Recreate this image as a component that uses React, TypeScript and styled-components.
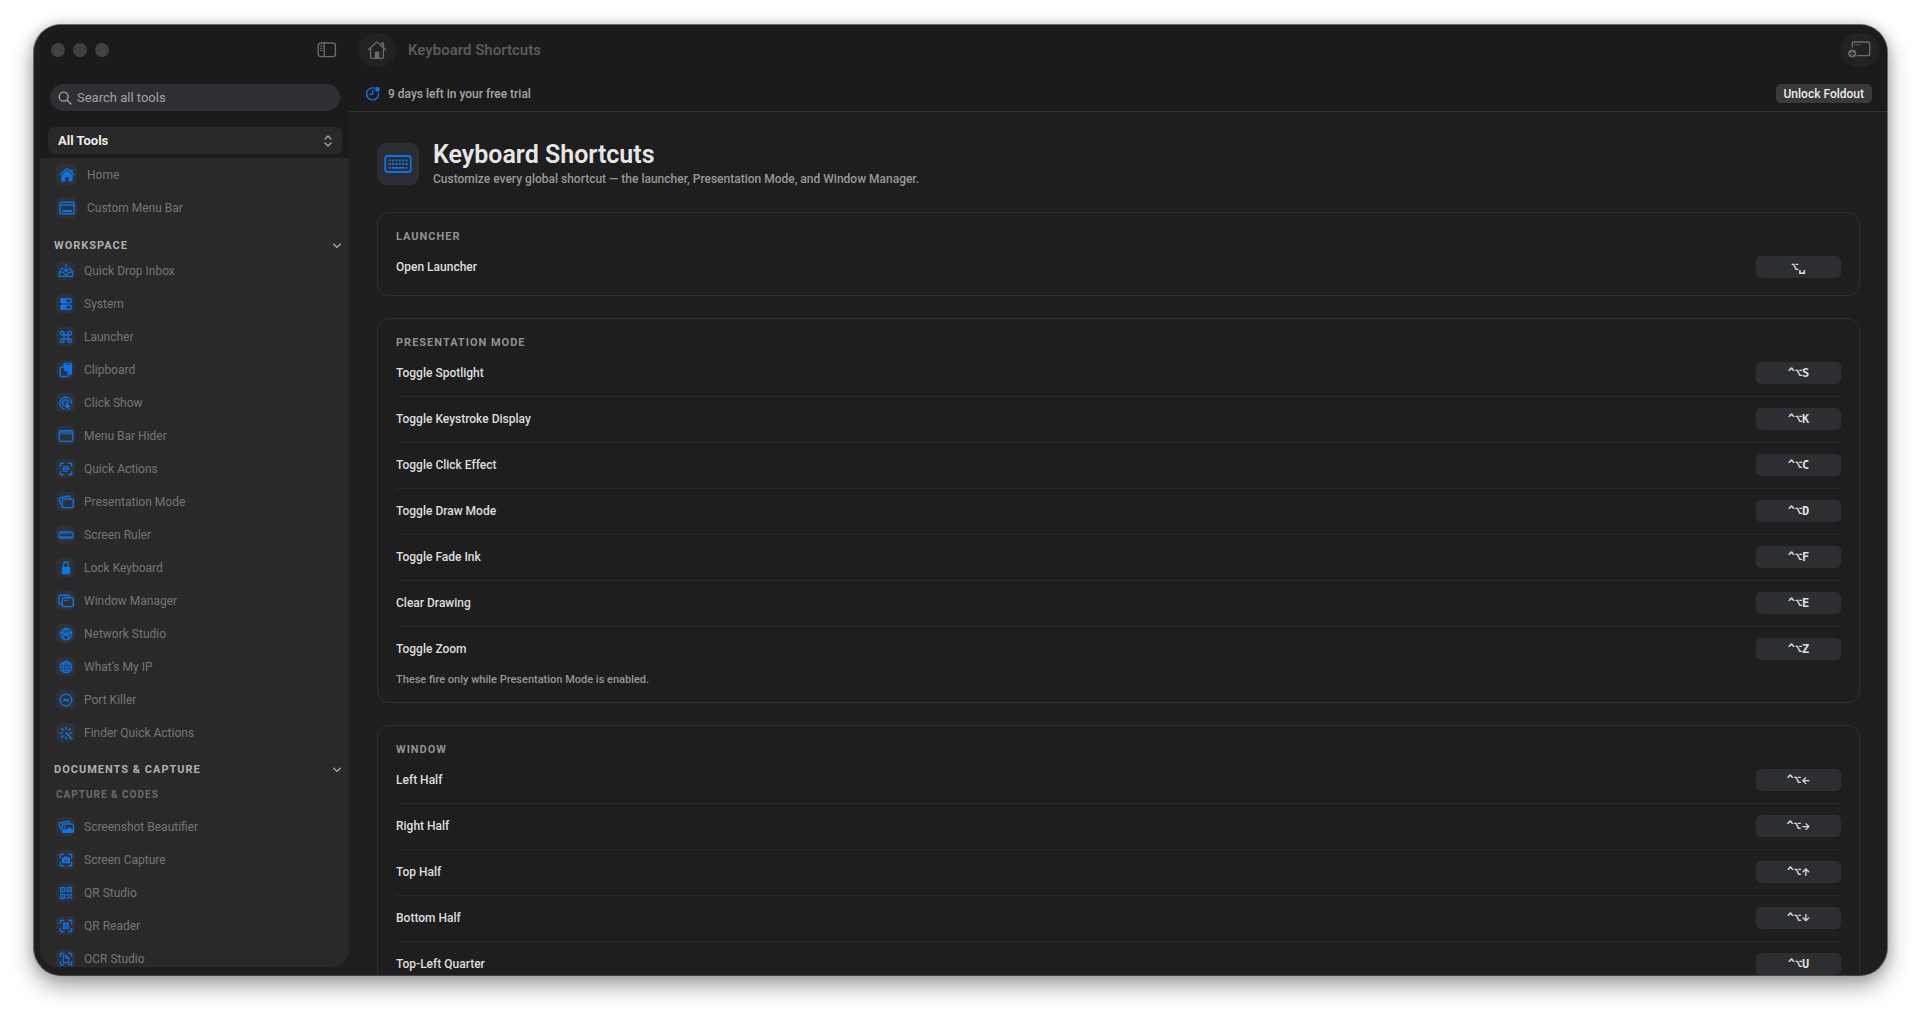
import React from "react";
import styled, { createGlobalStyle } from "styled-components";

const sans = `Roboto, "Liberation Sans", sans-serif`;
const mono = `"DejaVu Sans Mono", "Liberation Mono", monospace`;
const blue = "#0a74ea";
const tileColor = "#303136";

const GlobalStyle = createGlobalStyle`
  *, *::before, *::after { box-sizing: border-box; }
  html, body { margin: 0; height: 100%; background: #ffffff; }
  body { font-family: ${sans}; overflow: hidden; }
  button, input, select { font-family: inherit; border: 0; margin: 0; padding: 0; outline: 0; background: none; }
  h1, h2, h3, p, ul { margin: 0; padding: 0; }
  ul { list-style: none; }
  svg { display: block; flex: none; }
`;

const Desktop = styled.div`
  height: 100vh;
  padding: 24px 32px 40px 33px;
  background: #ffffff;
`;

const Window = styled.div`
  display: grid;
  grid-template-columns: 315px minmax(0, 1fr);
  height: 100%;
  overflow: hidden;
  border: 1px solid #6a6c6c;
  border-bottom-color: #464646;
  border-radius: 28px;
  background: #1e1e1e;
  box-shadow: 0 10px 22px rgba(0, 0, 0, 0.36), 0 0 12px rgba(0, 0, 0, 0.14);
`;

/* Sidebar */

const Sidebar = styled.aside`
  display: flex;
  flex-direction: column;
  min-height: 0;
  padding: 0 0 8px 6px;
`;

const SidebarTop = styled.div`
  flex: none;
  padding-bottom: 4px;
  background: #1b1b1b;
`;

const TitleBar = styled.div`
  display: flex;
  align-items: center;
  height: 50px;
  padding: 0 12px 0 11px;
`;

const Lights = styled.div`
  display: flex;
  gap: 8px;
  margin-right: auto;
`;

const Light = styled.button`
  width: 14px;
  height: 14px;
  border-radius: 50%;
  background: #404144;
`;

const PlainButton = styled.button`
  color: #6b6b6b;
`;

const SearchBox = styled.label`
  display: flex;
  align-items: center;
  gap: 5px;
  height: 27px;
  margin: 9px 9px 0 10px;
  padding: 0 8px;
  border-radius: 14px;
  background: #2e2f33;
  color: #a9a9ab;
`;

const SearchInput = styled.input`
  flex: 1;
  min-width: 0;
  font-size: 13px;
  line-height: 18px;
  color: #d0d0d0;
  &::placeholder { color: #a2a2a4; opacity: 1; }
`;

const Picker = styled.label`
  display: flex;
  align-items: center;
  height: 27px;
  margin: 16px 7px 0 8px;
  padding-right: 9px;
  border-radius: 6px;
  background: #282828;
  color: #a8a8a8;
`;

const PickerSelect = styled.select`
  flex: 1;
  height: 27px;
  padding-left: 10px;
  appearance: none;
  font-size: 13px;
  font-weight: 700;
  color: #ececec;
`;

const ToolList = styled.nav`
  flex: 1;
  min-height: 0;
  overflow: hidden;
  border-radius: 0 0 18px 18px;
  background: #292929;
`;

const TopGroup = styled.ul`
  padding-bottom: 1px;
`;

const ToolLink = styled.a<{ $large?: boolean }>`
  display: flex;
  align-items: center;
  gap: ${(p) => (p.$large ? 10 : 9)}px;
  height: 33px;
  padding-left: 16px;
  font-size: 12px;
  font-weight: 400;
  line-height: 16px;
  color: #767676;
  text-decoration: none;
`;

const Tile = styled.span<{ $large?: boolean }>`
  display: grid;
  place-items: center;
  width: ${(p) => (p.$large ? 21 : 19)}px;
  height: ${(p) => (p.$large ? 21 : 19)}px;
  border-radius: 5px;
  background: ${tileColor};
  color: ${blue};
`;

const SectionToggle = styled.button`
  display: flex;
  align-items: center;
  justify-content: space-between;
  width: 100%;
  height: 17px;
  margin-top: 12px;
  padding: 0 8px 0 14px;
  font-size: 11px;
  font-weight: 700;
  letter-spacing: 1px;
  color: #b0b0b0;
`;

const SubHeading = styled.h3`
  margin: 8px 0 6px 16px;
  font-size: 10px;
  font-weight: 700;
  line-height: 18px;
  letter-spacing: 1px;
  color: #6c6c6c;
`;

/* Main area */

const Main = styled.main`
  display: flex;
  flex-direction: column;
  min-width: 0;
  min-height: 0;
`;

const Toolbar = styled.header`
  display: flex;
  flex: none;
  align-items: center;
  gap: 12px;
  height: 50px;
  padding: 0 8px 0 9px;
  background: #1b1b1b;
`;

const RoundButton = styled.button`
  display: grid;
  place-items: center;
  width: 38px;
  height: 34px;
  border-radius: 17px;
  background: #222222;
  color: #6b6b6b;
`;

const ToolbarTitle = styled.div`
  flex: 1;
  font-size: 15px;
  font-weight: 600;
  color: #5a5a5a;
`;

const TrialBar = styled.div`
  display: flex;
  flex: none;
  align-items: center;
  gap: 7px;
  padding: 9px 15px 8px 16px;
  border-bottom: 1px solid #323232;
  background: #1b1b1b;
  font-size: 12px;
  font-weight: 500;
  line-height: 16px;
  color: #a6a6a6;
`;

const TrialIcon = styled.span`
  color: ${blue};
`;

const UnlockButton = styled.button`
  height: 19px;
  margin-left: auto;
  padding: 0 8px;
  border-radius: 5px;
  background: #38393b;
  font-size: 12px;
  font-weight: 500;
  color: #ececec;
`;

const Content = styled.div`
  display: flex;
  flex: 1;
  flex-direction: column;
  gap: 22px;
  min-height: 0;
  overflow: hidden;
  padding: 28px 27px 0 28px;
`;

const PageHead = styled.div`
  display: flex;
  flex: none;
  align-items: center;
  gap: 14px;
  margin-bottom: 2px;
`;

const PageTile = styled.span`
  display: grid;
  place-items: center;
  width: 42px;
  height: 42px;
  border-radius: 9px;
  background: #2c2d32;
  color: ${blue};
`;

const PageTitle = styled.h1`
  font-size: 25px;
  font-weight: 600;
  line-height: 30px;
  color: #e6e6e6;
`;

const PageText = styled.p`
  font-size: 12px;
  font-weight: 500;
  line-height: 18px;
  color: #989898;
`;

const Card = styled.section`
  flex: none;
  padding: 16px 18px 5px;
  border: 1px solid #2e2e2e;
  border-radius: 12px;
`;

const CardTitle = styled.h2`
  font-size: 11px;
  font-weight: 700;
  line-height: 15px;
  letter-spacing: 1px;
  color: #929292;
`;

const Row = styled.li`
  display: flex;
  align-items: center;
  justify-content: space-between;
  height: 46px;
  font-size: 12px;
  font-weight: 500;
  color: #dedede;
  & + & { box-shadow: inset 0 1px #282828; }
`;

const KeyButton = styled.button`
  width: 85px;
  height: 22px;
  border-radius: 5px;
  background: #2d2e32;
  font-family: ${mono};
  font-size: 12px;
  font-weight: 700;
  color: #dfdfdf;
`;

const ArrowKey = styled.span`
  font-family: Inter, ${mono};
  font-size: 10px;
`;

const Footnote = styled.p`
  margin: 1px 0 10px;
  font-size: 11px;
  font-weight: 500;
  line-height: 14px;
  color: #969696;
`;

/* Icons */

const S = ({ w = 16, h = 16, sw = 1.2, children }: { w?: number; h?: number; sw?: number; children: React.ReactNode }) => (
  <svg width={w} height={h} viewBox={`0 0 ${w} ${h}`} fill="none" stroke="currentColor" strokeWidth={sw} strokeLinecap="round" strokeLinejoin="round" aria-hidden="true">
    {children}
  </svg>
);

const fill = { fill: "currentColor", stroke: "none" };
const corners = <path d="M2.3 5.2V3.8a1.5 1.5 0 0 1 1.5-1.5h1.4M10.8 2.3h1.4a1.5 1.5 0 0 1 1.5 1.5v1.4M13.7 10.8v1.4a1.5 1.5 0 0 1-1.5 1.5h-1.4M5.2 13.7H3.8a1.5 1.5 0 0 1-1.5-1.5v-1.4" strokeWidth="1.4" />;

const icons: Record<string, React.ReactNode> = {
  home: (
    <S>
      <path d="M.9 7.7 8 1.5l7.1 6.2" />
      <path {...fill} d="M12 2.4h1.7v3.4L12 4.4zM8 3.6l5.6 4.8v5.2c0 .6-.4 1-1 1H9.6V10H6.4v4.6h-3c-.6 0-1-.4-1-1V8.4z" />
    </S>
  ),
  menubar: (
    <S sw={1.4}>
      <rect x=".9" y="2.2" width="14.2" height="11.6" rx="1.6" />
      <path d="M1 5h14" />
      <rect {...fill} x="3.2" y="10" width="9.6" height="2" rx=".5" />
    </S>
  ),
  inbox: (
    <S>
      <path d="M5 5.2H3.9L1.3 9.2v4.2h13.4V9.2l-2.6-4H11M1.3 9.2h3.5c.5 0 .8.3.9.8.3 1 1.2 1.6 2.3 1.6s2-.6 2.3-1.6c.1-.5.4-.8.9-.8h3.5M8 1.5v6.7M6 6.5l2 2 2-2" />
    </S>
  ),
  system: (
    <S>
      <rect {...fill} x="2.2" y="2" width="11.6" height="5.4" rx="1.7" />
      <rect {...fill} x="2.2" y="8.6" width="11.6" height="5.4" rx="1.7" />
      <rect x="8.6" y="3.4" width="3.8" height="2.6" rx=".8" fill={tileColor} stroke="none" />
      <rect x="8.6" y="10" width="3.8" height="2.6" rx=".8" fill={tileColor} stroke="none" />
    </S>
  ),
  launcher: (
    <S sw={1.4}>
      <path d="M6 6h4v4H6zM6 6H4.3A1.8 1.8 0 1 1 6 4.3zM10 6V4.3A1.8 1.8 0 1 1 11.7 6zM10 10h1.7a1.8 1.8 0 1 1-1.7 1.7zM6 10v1.7A1.8 1.8 0 1 1 4.3 10z" />
    </S>
  ),
  clipboard: (
    <S sw={1.4}>
      <rect {...fill} x="5.4" y=".8" width="8.6" height="12" rx="1.4" />
      <path d="M8 2.3h3.4" stroke={tileColor} strokeWidth="1" />
      <path d="M3.1 5.1h3.3l3.8 3.8v4.7c0 .5-.4.9-.9.9H3.1c-.5 0-.9-.4-.9-.9V6c0-.5.4-.9.9-.9z" fill={tileColor} />
      <path {...fill} d="M6.2 5.1v3.4c0 .4.3.8.8.8h3.2z" />
    </S>
  ),
  click: (
    <S sw={1.4}>
      <path d="M13.7 8.4A5.9 5.9 0 1 0 6 13.8M10.8 7.3A3.2 3.2 0 1 0 6.2 10.8" />
      <path {...fill} d="M7.6 6.6 13 11.5l-2.3.2 1.3 2.7-1.3.6-1.2-2.7-1.9 1.5z" />
    </S>
  ),
  hider: (
    <S sw={1.3}>
      <path d="M1.8 3h12.4v3.4H1.8z" fill="currentColor" fillOpacity=".6" stroke="none" />
      <rect x="1.2" y="2.6" width="13.6" height="10.8" rx="1.8" />
    </S>
  ),
  actions: (
    <S sw={1.3}>
      {corners}
      <path d="M5.4 5.8h5.2M4.4 8h7.2M5.4 10.2h3.8" />
    </S>
  ),
  presentation: (
    <S sw={1.4}>
      <path d="M2.4 10.3 1.2 4.9c-.1-.6.2-1.1.8-1.2l8.8-1.6c.6-.1 1 .2 1.1.8l.2 1.2" />
      <rect x="4.3" y="5" width="11" height="8.6" rx="1.2" />
    </S>
  ),
  ruler: (
    <S sw={1.3}>
      <rect x="1.2" y="5" width="13.6" height="6.2" rx="1" />
      <path d="M3.7 5.5V7M5.9 5.5V7M8 5.5v2M10.2 5.5V7M12.4 5.5V7" strokeWidth="1" />
      <path d="M2 10h12" />
    </S>
  ),
  lock: (
    <S sw={1.3}>
      <rect {...fill} x="3.8" y="6.8" width="8.4" height="7.4" rx="1.3" />
      <path d="M5.6 7V4.4a2.4 2.4 0 0 1 4.8 0V7" />
    </S>
  ),
  windows: (
    <S sw={1.4}>
      <path d="M3.6 11H2.3c-.8 0-1.4-.5-1.4-1.3V3.6c0-.8.6-1.3 1.4-1.3h8c.8 0 1.4.5 1.4 1.3v.6" />
      <rect x="4.3" y="4.8" width="10.9" height="8.8" rx="1.6" />
      <path d="M6.7 7.4h2" />
    </S>
  ),
  network: (
    <S sw={1.1}>
      <circle cx="8" cy="8" r="5.8" />
      <path d="M8 2.2 4 7.2l2.8 6.6M8 2.2l4.2 4.5L9.5 13M2.4 6.2 8 8.3l5.6-1.7M4 7.2l8.2-.5M3.4 11.6 8 8.3l4 3.8M8 2.2v6" />
    </S>
  ),
  globe: (
    <S sw={1.1}>
      <circle cx="8" cy="8" r="5.8" />
      <ellipse cx="8" cy="8" rx="2.9" ry="5.8" />
      <path d="M8 2.2v11.6M2.2 8h11.6M3 5h10M3 11h10" />
    </S>
  ),
  port: (
    <S sw={1.3}>
      <circle cx="8" cy="8" r="5.8" />
      <path {...fill} d="M4.2 9.6 6.8 6.2l2.2 1.2 2.8-1L9.4 10 7.2 8.7z" />
    </S>
  ),
  rays: (
    <S sw={1.5}>
      <path d="M8 2v2.2M3.7 3.7l1.4 1.4M2 8h2.2M3.7 12.3l1.4-1.4M8 11.8V14M11.8 8H14M12.3 3.7l-1.4 1.4" />
      <path d="m8 8 5.8 5.8" strokeWidth="1.7" />
    </S>
  ),
  photos: (
    <S sw={1.3}>
      <path d="M2.6 10 1 5.4c-.2-.6.1-1.1.7-1.3l8.6-2c.6-.1 1 .1 1.2.7l.3 1.2" />
      <rect x="4.2" y="5" width="11" height="8.4" rx="1.3" />
      <path {...fill} d="m4.2 11.3 2.6-2 1.8 1.2 2.9-2.6 3.5 3v2.5H4.2z" />
      <circle {...fill} cx="7" cy="7.5" r="1" />
    </S>
  ),
  capture: (
    <S>
      {corners}
      <path {...fill} fillRule="evenodd" d="M6.4 4.5h3.2l.7 1h1c.6 0 1 .4 1 1v3.8c0 .6-.4 1-1 1H4.7c-.6 0-1-.4-1-1V6.5c0-.6.4-1 1-1h1zM8 6.7a1.7 1.7 0 1 0 0 3.4 1.7 1.7 0 0 0 0-3.4z" />
      <circle {...fill} cx="8" cy="8.4" r="1.1" />
    </S>
  ),
  qr: (
    <S sw={1.3}>
      <path d="M2.7 2.7h4v4h-4zM9.3 2.7h4v4h-4zM2.7 9.3h4v4h-4z" />
      <path {...fill} d="M4 4h1.4v1.4H4zM10.6 4H12v1.4h-1.4zM4 10.6h1.4V12H4zM8.6 8.7h2v2h-2zM12 8.7h2v2h-2zM10.4 10.5h1.8v1.8h-1.8zM8.6 12.2h1.8V14H8.6zM12.2 12.2H14V14h-1.8z" />
    </S>
  ),
  reader: (
    <S>
      {corners}
      <path d="M5 4.6h6v6.8H5z" fill="currentColor" fillOpacity=".6" stroke="none" />
      <path d="M5.2 5h1.6v1.6H5.2zM9.2 5h1.6v1.6H9.2zM5.2 9.4h1.6V11H5.2zM9 9h2v2" strokeWidth=".8" />
    </S>
  ),
  ocr: (
    <S>
      {corners}
      <path d="M5.3 4.4h2.8l2.7 2.7v4.5H5.3zM8.1 4.4v2.7h2.7" />
    </S>
  ),
};

const SidebarGlyph = () => (
  <S w={20} h={16} sw={1.4}>
    <rect x="1.2" y="1" width="17.2" height="13.6" rx="2.6" />
    <path d="M7.2 1v13.6" />
    <path d="M3.3 4h1.8M3.3 6.3h1.8M3.3 8.6h1.8" strokeWidth="1" />
  </S>
);

const HouseGlyph = () => (
  <S w={20} h={20} sw={1.3}>
    <path d="M1.3 9.8 9.5 2.3c.3-.3.7-.3 1 0l8.2 7.5M14.8 6V3h1.7v4.6M3.6 8v9.2c0 .7.4 1.1 1.1 1.1h10.6c.7 0 1.1-.4 1.1-1.1V8" />
    <rect {...fill} x="7.8" y="11.6" width="4.4" height="6.5" />
  </S>
);

const AddWindowGlyph = () => (
  <S w={24} h={18} sw={1.4}>
    <path d="M4.2 6V3.2C4.2 1.9 5.1 1 6.4 1h13.2c1.3 0 2.2.9 2.2 2.2v9.2c0 1.3-.9 2.2-2.2 2.2H9.2" />
    <path d="M6.8 3.7h.2M9.1 3.7h.2M11.4 3.7h.2" />
    <circle {...fill} cx="4.2" cy="12.6" r="4" />
    <path d="M4.2 10.5v4.2M2.1 12.6h4.2" stroke="#222222" strokeWidth="1.2" />
  </S>
);

const KeyboardGlyph = () => (
  <S w={28} h={20} sw={1.8}>
    <rect x="1.2" y="2" width="25.6" height="16" rx="2" />
    <g strokeWidth="1.9" strokeLinecap="butt">
      <path d="M4.6 6.4h19M4.6 10h19" strokeDasharray="2.1 1.3" />
      <path d="M4.6 13.9h2.1M8 13.9h12.3M21.6 13.9h2.1" />
    </g>
  </S>
);

const TrialGlyph = () => (
  <S sw={1.4}>
    <path d="M9.4 2.2A6 6 0 1 0 13.5 7.2" />
    <path d="M7.6 4.8v3.6H4.8" />
    <circle {...fill} cx="12.5" cy="3.4" r="2.3" />
  </S>
);

const SearchGlyph = () => (
  <S w={14} h={14} sw={1.3}>
    <circle cx="5.7" cy="5.7" r="4.5" />
    <path d="m9.1 9.1 3.9 3.9" />
  </S>
);

const UpDownGlyph = () => (
  <S w={10} h={12} sw={1.3}>
    <path d="m2 4 3-3 3 3M2 8l3 3 3-3" />
  </S>
);

const ChevronGlyph = () => (
  <S w={8} h={6} sw={1.3}>
    <path d="m.8 1.2 3.2 3.2 3.2-3.2" />
  </S>
);

/* Data */

type Tool = [name: string, icon: string];

const topTools: Tool[] = [
  ["Home", "home"],
  ["Custom Menu Bar", "menubar"],
];

const workspaceTools: Tool[] = [
  ["Quick Drop Inbox", "inbox"],
  ["System", "system"],
  ["Launcher", "launcher"],
  ["Clipboard", "clipboard"],
  ["Click Show", "click"],
  ["Menu Bar Hider", "hider"],
  ["Quick Actions", "actions"],
  ["Presentation Mode", "presentation"],
  ["Screen Ruler", "ruler"],
  ["Lock Keyboard", "lock"],
  ["Window Manager", "windows"],
  ["Network Studio", "network"],
  ["What's My IP", "globe"],
  ["Port Killer", "port"],
  ["Finder Quick Actions", "rays"],
];

const captureTools: Tool[] = [
  ["Screenshot Beautifier", "photos"],
  ["Screen Capture", "capture"],
  ["QR Studio", "qr"],
  ["QR Reader", "reader"],
  ["OCR Studio", "ocr"],
];

type Shortcut = { label: string; keys: string; arrow?: string };
type Group = { title: string; rows: Shortcut[]; note?: string };

const groups: Group[] = [
  { title: "LAUNCHER", rows: [{ label: "Open Launcher", keys: "⌥␣" }] },
  {
    title: "PRESENTATION MODE",
    rows: [
      { label: "Toggle Spotlight", keys: "^⌥S" },
      { label: "Toggle Keystroke Display", keys: "^⌥K" },
      { label: "Toggle Click Effect", keys: "^⌥C" },
      { label: "Toggle Draw Mode", keys: "^⌥D" },
      { label: "Toggle Fade Ink", keys: "^⌥F" },
      { label: "Clear Drawing", keys: "^⌥E" },
      { label: "Toggle Zoom", keys: "^⌥Z" },
    ],
    note: "These fire only while Presentation Mode is enabled.",
  },
  {
    title: "WINDOW",
    rows: [
      { label: "Left Half", keys: "^⌥", arrow: "←" },
      { label: "Right Half", keys: "^⌥", arrow: "→" },
      { label: "Top Half", keys: "^⌥", arrow: "↑" },
      { label: "Bottom Half", keys: "^⌥", arrow: "↓" },
      { label: "Top-Left Quarter", keys: "^⌥U" },
    ],
  },
];

const ToolItems = ({ tools, large }: { tools: Tool[]; large?: boolean }) => (
  <>
    {tools.map(([name, icon]) => (
      <li key={name}>
        <ToolLink href="#" $large={large}>
          <Tile $large={large}>{icons[icon]}</Tile>
          {name}
        </ToolLink>
      </li>
    ))}
  </>
);

export default function App() {
  return (
    <Desktop>
      <GlobalStyle />
      <Window>
        <Sidebar>
          <SidebarTop>
            <TitleBar>
              <Lights>
                <Light aria-label="Close" />
                <Light aria-label="Minimize" />
                <Light aria-label="Zoom" />
              </Lights>
              <PlainButton aria-label="Toggle sidebar">
                <SidebarGlyph />
              </PlainButton>
            </TitleBar>
            <SearchBox>
              <SearchGlyph />
              <SearchInput type="text" placeholder="Search all tools" aria-label="Search all tools" />
            </SearchBox>
            <Picker>
              <PickerSelect aria-label="Tool filter" defaultValue="all">
                <option value="all">All Tools</option>
              </PickerSelect>
              <UpDownGlyph />
            </Picker>
          </SidebarTop>
          <ToolList>
            <TopGroup>
              <ToolItems tools={topTools} large />
            </TopGroup>
            <SectionToggle aria-expanded="true">
              WORKSPACE
              <ChevronGlyph />
            </SectionToggle>
            <ul>
              <ToolItems tools={workspaceTools} />
            </ul>
            <SectionToggle aria-expanded="true">
              DOCUMENTS &amp; CAPTURE
              <ChevronGlyph />
            </SectionToggle>
            <SubHeading>CAPTURE &amp; CODES</SubHeading>
            <ul>
              <ToolItems tools={captureTools} />
            </ul>
          </ToolList>
        </Sidebar>
        <Main>
          <Toolbar>
            <RoundButton aria-label="Home">
              <HouseGlyph />
            </RoundButton>
            <ToolbarTitle>Keyboard Shortcuts</ToolbarTitle>
            <RoundButton aria-label="New window">
              <AddWindowGlyph />
            </RoundButton>
          </Toolbar>
          <TrialBar>
            <TrialIcon>
              <TrialGlyph />
            </TrialIcon>
            9 days left in your free trial
            <UnlockButton>Unlock Foldout</UnlockButton>
          </TrialBar>
          <Content>
            <PageHead>
              <PageTile>
                <KeyboardGlyph />
              </PageTile>
              <div>
                <PageTitle>Keyboard Shortcuts</PageTitle>
                <PageText>Customize every global shortcut — the launcher, Presentation Mode, and Window Manager.</PageText>
              </div>
            </PageHead>
            {groups.map((group) => (
              <Card key={group.title}>
                <CardTitle>{group.title}</CardTitle>
                <ul>
                  {group.rows.map(({ label, keys, arrow }) => (
                    <Row key={label}>
                      {label}
                      <KeyButton aria-label={`${label} shortcut`}>
                        {keys}
                        {arrow && <ArrowKey>{arrow}</ArrowKey>}
                      </KeyButton>
                    </Row>
                  ))}
                </ul>
                {group.note && <Footnote>{group.note}</Footnote>}
              </Card>
            ))}
          </Content>
        </Main>
      </Window>
    </Desktop>
  );
}
